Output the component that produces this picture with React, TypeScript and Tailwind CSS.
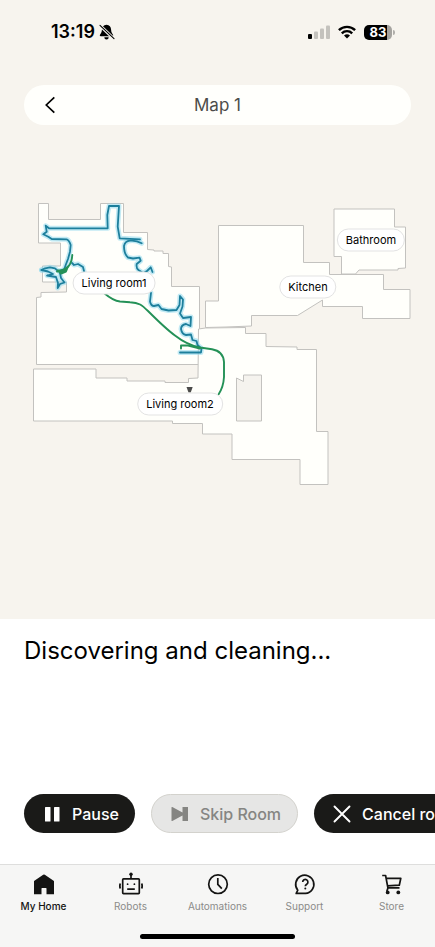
import React, { useState } from 'react';
import clsx from 'clsx';

const MAP_WIDTH = 435;
const MAP_HEIGHT = 494;

// map coordinates, top left corner is 0,125
const rooms = [
  {
    id: 'living-room-1',
    label: 'Living room1',
    x: 114,
    y: 283,
    points:
      '38.5,203.5 48.5,203.5 48.5,219.5 100.5,219.5 100.5,203.5 123.5,203.5 123.5,232.5 147.5,232.5 147.5,249.5 154,250 154,251 163,251 163,253.5 168.5,253.5 168.5,266.5 171.5,267 171.5,286.5 199.5,286.5 199.5,364.5 36.5,364.5 36.5,297.5 41,297 41,292.5 66.5,292 66.5,282 42.5,282 42.5,266 60.5,266 60.5,243 38.5,243',
  },
  {
    id: 'kitchen',
    label: 'Kitchen',
    x: 308,
    y: 287,
    points:
      '218.5,225.5 303.5,225.5 303.5,262.5 329.5,262.5 329.5,274.5 383.5,274.5 383.5,289.5 410,289.5 410,318.5 362.5,318.5 362.5,306.5 322.5,306.5 322.5,300 297.5,315.5 251.5,315.5 251.5,326 226,327 205.5,327.5 205.5,301 218.5,301',
  },
  {
    id: 'bathroom',
    label: 'Bathroom',
    x: 371,
    y: 240,
    points:
      '334,209 394.5,209 394.5,227 405.5,227 405.5,268 398,268.5 398,270 359,270 355.5,274 341.5,274 341.5,256.5 334,256.5',
  },
  {
    id: 'living-room-2',
    label: 'Living room2',
    x: 180,
    y: 404,
    points:
      '33.5,369 96,369 96,378 127,378 127,381 165,381 165,382.5 188.5,382.5 188.5,378.5 198,378 198.5,329 205.5,328 245.5,327.5 245.5,333.5 266,333.5 266,346.5 297,347 297,349.5 316.5,349.5 316.5,431.5 328,431.5 328,484.5 300,484.5 300,459.5 232,459.5 232,434 202.5,434 202.5,423.5 172.5,423.5 172.5,421 33.5,421',
  },
];

const wallPaths = [
  'M41.5 270 L45 268.3 L50 267.3 L55 268.3 L58 271 L64 270 L65.7 265 L68 259 L70 251.7 L70.7 245 Q69 240 66.7 239.3 L51.7 239 L48.3 236.7 L43.3 234.3 L46.7 231.7 L45.7 225.7 L49 228.3 L107.7 228.3 L107.3 215 L109 206 L119 206 L117.7 226.7 L119.7 238.3 L140 239.3',
  'M141.7 243.3 Q136 240 130 240.7 Q125 241 124 246 Q124 254 128 257.5 L133 258.5 L139.5 257.7 L140.7 260.7 L136.7 264 Q136 268 138.5 270 L143 273 L147 271 L150.7 267.3 L152.5 272',
  'M41.5 270 L48 271.5 L53 274 L47 275.5 L56 277 L58 283 L57.7 288 L60 284 L64.5 282.5 L61 278 L60 273 L64 270',
  'M72 263 L74 265 L78 264 L83 267 L84.5 273',
  'M151 293 L150 301.5 Q151 306 154 306 L158.5 305 L161.5 309 L168.5 310.5 L176.5 310 L179.5 305 L180 296 L183 299.5 L182.5 306.5 L180 313.5 L183 318 L191 317 L190.5 326 L186 324 Q181 325 181 329 Q182 334.5 186 335 L191 334.5 L192.5 340 L196.5 341 L197.5 345 L201.5 348.5 L201 352.5 L180 352.5',
];

const tabs = [
  { id: 'home', label: 'My Home', Icon: HomeIcon },
  { id: 'robots', label: 'Robots', Icon: RobotIcon },
  { id: 'automations', label: 'Automations', Icon: ClockIcon },
  { id: 'support', label: 'Support', Icon: SupportIcon },
  { id: 'store', label: 'Store', Icon: StoreIcon },
];

function HomeIcon() {
  return (
    <svg viewBox="0 0 24 24" className="size-6" fill="currentColor" aria-hidden="true">
      <path d="M11.2 2.7 2.4 8.8a.9.9 0 0 0-.4.8v12.6h7.5v-5.7a.5.5 0 0 1 .5-.5h4a.5.5 0 0 1 .5.5v5.7H22V9.6a.9.9 0 0 0-.4-.8l-8.800-6.100a1.400 1.400 0 0 0-1.600 0Z" />
    </svg>
  );
}

function RobotIcon() {
  return (
    <svg viewBox="0 0 24 24" className="size-6" fill="none" stroke="currentColor" strokeWidth="1.7" strokeLinejoin="round" aria-hidden="true">
      <rect x="3.7" y="6.9" width="16.6" height="14.7" rx="0.8" />
      <path d="M12 3v4M8.2 17.2h7.6" />
      <path d="M1.3 11.5Q.4 14 1.3 16.5M22.7 11.5q.9 2.5 0 5" strokeWidth="1.8" />
      <circle cx="12" cy="2.3" r="1.7" fill="currentColor" stroke="none" />
      <circle cx="8.6" cy="12.2" r="0.9" fill="currentColor" stroke="none" />
      <circle cx="15.4" cy="12.2" r="0.9" fill="currentColor" stroke="none" />
    </svg>
  );
}

function ClockIcon() {
  return (
    <svg viewBox="0 0 24 24" className="size-6" fill="none" stroke="currentColor" strokeWidth="1.7" aria-hidden="true">
      <circle cx="12" cy="12.2" r="9.3" />
      <path d="M11.8 6v6.4l4 4.2" />
    </svg>
  );
}

function SupportIcon() {
  return (
    <svg viewBox="0 0 24 24" className="size-6" fill="none" stroke="currentColor" strokeWidth="1.7" strokeLinejoin="round" aria-hidden="true">
      <path d="M12.5 21.400H3.200l1.600-3.200a9.100 9.100 0 1 1 7.700 3.200Z" />
      <path d="M9.700 10a2.600 2.600 0 1 1 4 2.200c-.9.600-1.400 1-1.400 2" />
      <circle cx="12.3" cy="16.6" r="1" fill="currentColor" stroke="none" />
    </svg>
  );
}

function StoreIcon() {
  return (
    <svg viewBox="0 0 24 24" className="size-6" fill="none" stroke="currentColor" strokeWidth="1.7" strokeLinejoin="round" aria-hidden="true">
      <path d="M2.2 3.5h3.4l2.3 12.4h11.6M6.2 6.3h14.6l-1.5 6.9-11.800.7" />
      <path d="M7.9 15.900 6.800 19.500" />
      <circle cx="7.7" cy="20.4" r="1.9" fill="currentColor" stroke="none" />
      <circle cx="18.3" cy="20.4" r="1.9" fill="currentColor" stroke="none" />
    </svg>
  );
}

const StatusBar: React.FC = () => (
  <div className="flex h-16 items-center justify-between pl-[51px] pr-10 text-black">
    <div className="flex items-center gap-1">
      <time className="text-[18px] leading-6 font-semibold">13:19</time>
      <svg viewBox="0 0 16 16" className="size-4" fill="currentColor" aria-label="Silent mode">
        <path d="M7.500.8c-3 0-4.500 2.200-4.600 5C2.800 9 1.500 9.600.9 11c-.3.700 0 1.200.8 1.200h11.600c.8 0 1.100-.5.800-1.200-.6-1.400-1.900-2-2-5.200-.1-2.800-1.600-5-4.600-5Z" />
        <path d="M5.300 13.200h4.400a2.200 2.200 0 0 1-4.400 0Z" />
        <path d="M.6 1.200 15 14.800" stroke="#f7f4ee" strokeWidth="3" />
        <path d="M1 1.400 15 14.600" stroke="currentColor" strokeWidth="1.1" strokeLinecap="round" />
      </svg>
    </div>
    <div className="flex items-center gap-2">
      <svg viewBox="0 0 22 14" className="h-3.5 w-[22px]" aria-label="Signal">
        <rect x="0" y="9" width="4" height="5" rx="1" fill="#000" />
        <rect x="6" y="6.5" width="4" height="7.5" rx="1" fill="#c4c2bd" />
        <rect x="12" y="3.5" width="4" height="10.5" rx="1" fill="#c4c2bd" />
        <rect x="18" y="0.5" width="4" height="13.5" rx="1" fill="#c4c2bd" />
      </svg>
      <svg viewBox="0 0 18 14" className="h-3.5 w-[18px]" fill="none" stroke="#000" strokeWidth="2.4" aria-label="Wi-Fi">
        <path d="M.9 5.200a11.600 11.600 0 0 1 16.200 0M3.800 8.300a7.400 7.400 0 0 1 10.400 0" />
        <path d="M9 13.600 6 10.600a4.300 4.300 0 0 1 6 0Z" fill="#000" stroke="none" />
      </svg>
      <div className="flex items-center gap-px">
        <span className="flex h-[15px] w-7 items-center justify-center rounded-[5px] bg-linear-to-r from-black from-83% to-[#a5a39f] to-83% text-[13px] leading-none font-bold text-white">
          83
        </span>
        <span className="h-[5px] w-0.5 rounded-r-full bg-[#b0aeaa]" />
      </div>
    </div>
  </div>
);

const FloorMap: React.FC = () => (
  <div className="relative aspect-[435/494] w-full">
    <svg viewBox={`0 125 ${MAP_WIDTH} ${MAP_HEIGHT}`} className="block w-full" fill="none" aria-label="Floor plan">
      <g fill="#fffffb" stroke="#c3c2bf" strokeWidth="1">
        {rooms.map(room => (
          <polygon key={room.id} points={room.points} />
        ))}
        <polygon points="236.5,378 243.5,381.5 243.5,375 261.5,375 261.5,421 236.5,421" fill="#f5f3ee" />
      </g>
      <g strokeLinejoin="round" strokeLinecap="round">
        {wallPaths.map(d => (
          <path key={d} d={d} stroke="#8fd8ee" strokeWidth="5" opacity="0.55" />
        ))}
        {wallPaths.map(d => (
          <path key={d} d={d} stroke="#1d7f9c" strokeWidth="1.8" />
        ))}
      </g>
      <g stroke="#249157" strokeWidth="1.9" strokeLinecap="round" strokeLinejoin="round">
        <path d="M72.3 255C72 260 70.5 264 68.3 266.5Q64 270.5 57 271.5" />
        <path d="M58 270.5l6 1 4-5-2 5-5 2Z" fill="#249157" />
        <path d="M104 293C111 299 115 301 120 301.5L130 302.2C139 302.5 142 305 148 311C156 319 166 329 175 335.5C182 341 190 345.5 200 347.5L212 349.2C220 350.5 223.5 355 224 362V377C223.5 386 221.5 390 218.5 394.5" />
        <path d="M181 348.5V345.5H188L200 348.5" />
      </g>
      <path d="M186.5 387h6.200l-2 5.500h-2.200Z" fill="#4b4b4a" />
    </svg>
    {rooms.map(room => (
      <button
        key={room.id}
        type="button"
        className="absolute h-[23px] -translate-x-1/2 -translate-y-1/2 rounded-full border border-[#e3e3e3] bg-white px-2 text-[11px] leading-none whitespace-nowrap text-black"
        style={{ left: `${(room.x / MAP_WIDTH) * 100}%`, top: `${((room.y - 125) / MAP_HEIGHT) * 100}%` }}
      >
        {room.label}
      </button>
    ))}
  </div>
);

export default function App() {
  const [activeTab, setActiveTab] = useState('home');

  return (
    <div className="flex min-h-screen flex-col bg-white font-[Inter,sans-serif] text-[#1a1a18]">
      <main className="flex flex-1 flex-col">
        <section className="bg-[#f7f4ee]">
          <StatusBar />
          <header className="mx-6 mt-[21px] grid h-10 grid-cols-[40px_1fr_40px] items-center rounded-full bg-[#fffffc] px-1.5">
            <button type="button" aria-label="Back" className="flex h-10 items-center justify-center text-black">
              <svg viewBox="0 0 20 20" className="size-5" fill="none" stroke="currentColor" strokeWidth="1.7" aria-hidden="true">
                <path d="M14.3 2.400 6.300 10l8 7.600" />
              </svg>
            </button>
            <h1 className="text-center text-[17px] leading-6 text-[#4c4c4a]">Map 1</h1>
          </header>
          <FloorMap />
        </section>

        <section className="flex min-w-0 flex-1 flex-col justify-between gap-8 pt-4 pb-[31px]">
          <h2 className="px-6 text-2xl leading-8 text-black">Discovering and cleaning...</h2>
          <div className="flex gap-4 overflow-x-auto px-6 text-base font-medium whitespace-nowrap [scrollbar-width:none]">
            <button type="button" className="flex h-[39px] shrink-0 items-center gap-2 rounded-full bg-[#1a1a18] px-4 text-white">
              <svg viewBox="0 0 24 24" className="size-6" fill="currentColor" aria-hidden="true">
                <rect x="5" y="5" width="5.5" height="14.5" rx="0.6" />
                <rect x="14" y="5" width="5.5" height="14.5" rx="0.6" />
              </svg>
              Pause
            </button>
            <button
              type="button"
              disabled
              className="flex h-[39px] shrink-0 items-center gap-2 rounded-full border border-[#d3d2cd] bg-[#e6e6e5] px-4 text-[#858582]"
            >
              <svg viewBox="0 0 24 24" className="size-6" fill="currentColor" aria-hidden="true">
                <path d="M3.5 5.5v13q0 .8.8.4L14.500 13.500V19H20V5h-5.500v5.500L4.300 5.100q-.8-.4-.8.4Z" />
              </svg>
              Skip Room
            </button>
            <button type="button" className="flex h-[39px] shrink-0 items-center gap-2 rounded-full bg-[#1a1a18] px-4 text-white">
              <svg viewBox="0 0 24 24" className="size-6" fill="none" stroke="currentColor" strokeWidth="1.9" strokeLinecap="round" aria-hidden="true">
                <path d="m4.500 4.500 15 15M19.500 4.500l-15 15" />
              </svg>
              Cancel room
            </button>
          </div>
        </section>
      </main>

      <footer className="border-t border-[#dededd] bg-[#f6f6f5] pb-2">
        <nav className="grid grid-cols-5 pt-[7px]">
          {tabs.map(({ id, label, Icon }) => (
            <button
              key={id}
              type="button"
              onClick={() => setActiveTab(id)}
              className="flex flex-col items-center gap-0.5 text-[#141413]"
            >
              <Icon />
              <span className={clsx('text-[10px] leading-4', activeTab === id ? 'font-medium text-[#141413]' : 'text-[#8b8b89]')}>
                {label}
              </span>
            </button>
          ))}
        </nav>
        <div className="mx-auto mt-5 h-[5px] w-[155px] rounded-full bg-black" />
      </footer>
    </div>
  );
}
